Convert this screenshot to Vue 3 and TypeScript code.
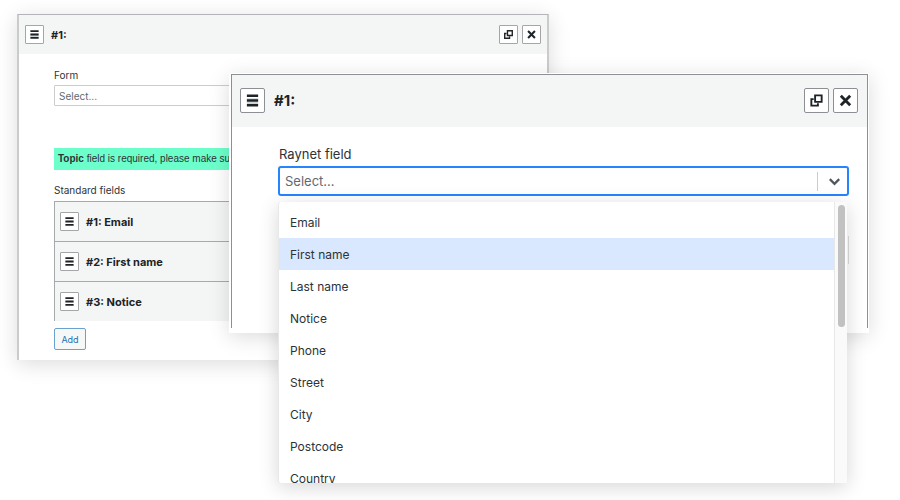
<script setup lang="ts">
import { ref } from 'vue'

const standardFields: string[] = ['Email', 'First name', 'Notice']
const options: string[] = [
  'Email',
  'First name',
  'Last name',
  'Notice',
  'Phone',
  'Street',
  'City',
  'Postcode',
  'Country',
]
const highlighted = ref('First name')
</script>

<template>
  <main class="stage">
    <section class="window back">
      <header class="bar">
        <button class="tool" type="button" aria-label="Reorder">
          <svg viewBox="0 0 16 16"><path class="shade" d="M2 8h12M2 11h12" /><path class="lines" d="M2 3h12M2 8h12M2 13h12" /></svg>
        </button>
        <h2 class="title">#1:</h2>
        <button class="tool" type="button" aria-label="Duplicate">
          <svg viewBox="0 0 16 16"><path d="M6.5 2.5h7v7h-7zM5 6.5H2.5v7h7V11" /></svg>
        </button>
        <button class="tool" type="button" aria-label="Remove">
          <svg viewBox="0 0 16 16"><path class="cross" d="M3 3l10 10M13 3L3 13" /></svg>
        </button>
      </header>
      <div class="body">
        <label class="label" for="form">Form</label>
        <select id="form" class="select">
          <option>Select...</option>
        </select>
        <p class="notice"><strong>Topic</strong> field is required, please make sure</p>
        <h3 class="label">Standard fields</h3>
        <ul class="fields">
          <li v-for="(name, i) in standardFields" :key="name" class="row">
            <button class="tool" type="button" aria-label="Reorder">
              <svg viewBox="0 0 16 16"><path class="lines" d="M2 3h12M2 8h12M2 13h12" /></svg>
            </button>
            <span>#{{ i + 1 }}: {{ name }}</span>
          </li>
        </ul>
        <button class="add" type="button">Add</button>
      </div>
    </section>

    <section class="front">
      <div class="window">
        <header class="bar">
          <button class="tool" type="button" aria-label="Reorder">
            <svg viewBox="0 0 16 16"><path class="shade" d="M2 7h12M2 11h12" /><path class="lines" d="M2 3h12M2 8h12M2 13h12" /></svg>
          </button>
          <h2 class="title">#1:</h2>
          <button class="tool" type="button" aria-label="Duplicate">
            <svg viewBox="0 0 16 16"><path d="M6.5 2.5h7v7h-7zM5 6.5H2.5v7h7V11" /></svg>
          </button>
          <button class="tool" type="button" aria-label="Remove">
            <svg viewBox="0 0 16 16"><path class="cross" d="M3 3l10 10M13 3L3 13" /></svg>
          </button>
        </header>
        <div class="body">
          <label class="label" for="raynet">Raynet field</label>
          <div class="combo">
            <select id="raynet" class="select">
              <option>Select...</option>
            </select>
            <span class="indicator">
              <svg viewBox="0 0 16 16"><path d="M3 5.5l5 5 5-5" /></svg>
            </span>
            <div class="menu">
              <ul class="options" role="listbox" aria-label="Raynet field">
                <li
                  v-for="name in options"
                  :key="name"
                  class="option"
                  :class="{ active: name === highlighted }"
                  role="option"
                  :aria-selected="name === highlighted"
                  @mouseenter="highlighted = name"
                >
                  {{ name }}
                </li>
              </ul>
              <div class="track"><div class="thumb"></div></div>
            </div>
          </div>
          <div class="next"></div>
        </div>
      </div>
    </section>
  </main>
</template>

<style>
body {
  background: #fff;
}
</style>

<style scoped>
* {
  box-sizing: border-box;
}
.stage {
  display: grid;
  align-items: start;
  min-height: 500px;
  padding: 14px 31px 0 17px;
  overflow: hidden;
  font-family: Inter, 'Liberation Sans', sans-serif;
  font-size: 10px;
  color: #2c3338;
}
.back,
.front {
  grid-area: 1 / 1;
  background: #fff;
}
.window {
  border: 1px solid #8c8f94;
  border-bottom: 0;
}
.back {
  margin-right: 320px;
  border-color: #b4b5b9;
  border-width: 1px 2px 0;
  border-left-color: #cbcbcb;
  border-right-color: #cbcbcb;
  box-shadow: 0 4px 20px rgba(0, 0, 0, 0.14);
}
.front {
  z-index: 1;
  margin: 59px 0 0 212px;
  padding: 1px 1px 5px 2px;
  box-shadow: 0 4px 20px rgba(0, 0, 0, 0.14);
}
.bar {
  display: flex;
  align-items: center;
  gap: 4px;
  background: #f4f6f6;
}
.back .bar {
  height: 39px;
  padding: 0 6px;
}
.front .bar {
  height: 52px;
  padding: 0 9px 1px 8px;
}
.title {
  flex: 1;
  margin: 0 0 0 3px;
  font-size: 11px;
  font-weight: 700;
  color: #1d2327;
}
.front .title {
  margin-left: 5px;
  font-size: 15px;
}
.tool {
  display: grid;
  flex: none;
  place-items: center;
  width: 19px;
  height: 19px;
  padding: 0;
  border: 1px solid #a4a6a9;
  border-radius: 1px;
  background: #fff;
}
.tool svg {
  width: 11px;
  height: 11px;
  fill: none;
  stroke: #1d2327;
  stroke-width: 2;
}
.tool .lines {
  stroke-width: 2.6;
}
.tool .shade {
  stroke: #cfd4d4;
  stroke-width: 3;
}
.tool .cross {
  stroke-width: 3;
}
.front .tool {
  width: 25px;
  height: 25px;
  border-color: #8c8f94;
  border-radius: 2px;
}
.front .tool svg {
  width: 15px;
  height: 15px;
}
.back .body {
  padding: 14px 18px 10px 35px;
}
.front .body {
  height: 201px;
  padding: 19px 18px 0 46px;
}
.label {
  display: block;
  margin: 0;
  font-size: 10px;
  font-weight: 400;
  line-height: 14px;
}
.front .label {
  margin-bottom: 4px;
  padding-left: 1px;
  font-size: 13px;
  line-height: 16px;
}
.select {
  display: block;
  width: 100%;
  height: 21px;
  margin: 3px 0 42px;
  padding: 0 4px;
  appearance: none;
  border: 1px solid #ccc;
  border-radius: 1px;
  background: #fff;
  color: #646970;
  font: inherit;
}
.notice {
  margin: 0 0 13px;
  padding: 0 4px;
  overflow: hidden;
  background: #6dffcb;
  font-family: 'Liberation Sans', sans-serif;
  font-size: 10px;
  line-height: 22px;
  white-space: nowrap;
}
.fields {
  margin: 4px 0 7px;
  padding: 0;
  list-style: none;
  border-left: 1px solid #a7aaad;
}
.row {
  display: flex;
  align-items: center;
  gap: 7px;
  height: 40px;
  padding-left: 5px;
  border-top: 1px solid #a7aaad;
  background: #f4f6f6;
  color: #1d2327;
  font-size: 11px;
  font-weight: 700;
}
.add {
  display: block;
  width: 32px;
  height: 22px;
  padding: 0;
  border: 1px solid #6ca0cf;
  border-radius: 2px;
  background: #f6f7f7;
  color: #2271b1;
  font: inherit;
  font-size: 9px;
}
.combo {
  position: relative;
}
.front .select {
  height: 30px;
  margin: 0;
  padding: 0 5px;
  border: 2px solid #2684ff;
  border-radius: 3px;
  font-size: 13px;
}
.indicator {
  position: absolute;
  top: 6px;
  right: 2px;
  display: grid;
  place-items: center;
  width: 30px;
  height: 19px;
  padding-left: 3px;
  border-left: 1px solid #ccc;
  pointer-events: none;
}
.indicator svg {
  width: 15px;
  height: 15px;
  fill: none;
  stroke: #50575e;
  stroke-width: 2.4;
}
.menu {
  position: absolute;
  top: 36px;
  right: 2px;
  left: 0;
  z-index: 2;
  display: flex;
  height: 281px;
  overflow: hidden;
  border-left: 1px solid #e8e8e8;
  border-radius: 3px 0 0 3px;
  background: #fff;
  box-shadow: 0 4px 20px rgba(0, 0, 0, 0.16);
}
.options {
  flex: 1;
  margin: 0;
  padding: 4px 0 0;
  list-style: none;
}
.option {
  height: 32px;
  padding: 1px 11px 0;
  font-size: 12px;
  line-height: 32px;
}
.option.active {
  background: #d9e7ff;
}
.track {
  width: 13px;
  padding: 3px 2px 0 3px;
  border-left: 1px solid #e8e8e8;
  background: #fafafa;
}
.thumb {
  height: 122px;
  border-radius: 4px;
  background: #c1c1c1;
}
.next {
  height: 28px;
  margin-top: 40px;
  border-right: 1px solid #ddd;
}
</style>
